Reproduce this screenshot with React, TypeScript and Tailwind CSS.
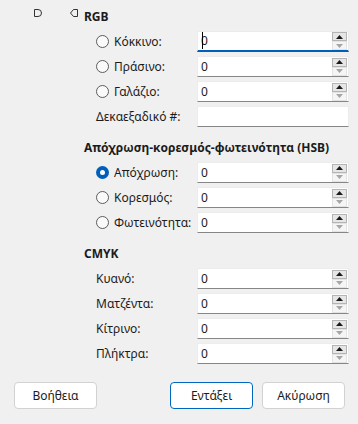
import React from "react";

type Row = { label: string; value: string; radio?: boolean; checked?: boolean; spin?: boolean; focused?: boolean };

const rgb: Row[] = [
  { label: "Κόκκινο:", value: "0", radio: true, spin: true, focused: true },
  { label: "Πράσινο:", value: "0", radio: true, spin: true },
  { label: "Γαλάζιο:", value: "0", radio: true, spin: true },
  { label: "Δεκαεξαδικό #:", value: "" },
];

const hsb: Row[] = [
  { label: "Απόχρωση:", value: "0", radio: true, checked: true, spin: true },
  { label: "Κορεσμός:", value: "0", radio: true, spin: true },
  { label: "Φωτεινότητα:", value: "0", radio: true, spin: true },
];

const cmyk: Row[] = [
  { label: "Κυανό:", value: "0", spin: true },
  { label: "Ματζέντα:", value: "0", spin: true },
  { label: "Κίτρινο:", value: "0", spin: true },
  { label: "Πλήκτρα:", value: "0", spin: true },
];

function Radio({ checked }: { checked?: boolean }) {
  if (checked) {
    return (
      <span className="flex h-[13px] w-[13px] items-center justify-center rounded-full bg-[#005fb8]">
        <span className="h-[5px] w-[5px] rounded-full bg-white" />
      </span>
    );
  }
  return <span className="h-[13px] w-[13px] rounded-full border border-[#5c5c5c] bg-[#fafafa]" />;
}

function Spin() {
  return (
    <div className="flex flex-col gap-0 pr-[1px]">
      <div className="flex h-[9px] w-[15px] items-center justify-center border border-[#b4b4b4] bg-[#e6e6e6]">
        <svg width="7" height="4" viewBox="0 0 7 4">
          <path d="M0 4 L3.5 0 L7 4 Z" fill="#1a1a1a" />
        </svg>
      </div>
      <div className="flex h-[9px] w-[15px] items-center justify-center border border-[#e3e3e3] bg-[#f5f5f5]">
        <svg width="7" height="4" viewBox="0 0 7 4">
          <path d="M0 0 L7 0 L3.5 4 Z" fill="#a6a6a6" />
        </svg>
      </div>
    </div>
  );
}

function Field({ row }: { row: Row }) {
  return (
    <div className="flex h-[21px] items-center">
      <div className="flex w-[113px] items-center gap-[5px] pl-[12px]">
        {row.radio && <Radio checked={row.checked} />}
        <span className="whitespace-nowrap text-[12px] leading-[16px] text-[#1b1b1b]">{row.label}</span>
      </div>
      <div
        className={`flex h-[21px] w-[152px] items-center justify-between border border-[#ececec] bg-white pl-[3px] ${
          row.focused ? "border-b-2 border-b-[#005fb8]" : "border-b-[#868686]"
        }`}
      >
        <span className="relative text-[12px] leading-[16px] text-[#1b1b1b]">
          {row.focused && <span className="absolute left-[1px] top-[-1px] h-[17px] w-[1px] bg-black" />}
          {row.value}
        </span>
        {row.spin && <Spin />}
      </div>
    </div>
  );
}

function Section({ title, rows, first }: { title: string; rows: Row[]; first?: boolean }) {
  return (
    <div className={first ? "" : "mt-[13px]"}>
      <div className="mb-[6px] h-[16px] text-[12px] font-bold leading-[16px] text-[#1b1b1b]">{title}</div>
      <div className="flex flex-col gap-[4px]">
        {rows.map((r) => (
          <Field key={r.label} row={r} />
        ))}
      </div>
    </div>
  );
}

function Btn({ label, primary }: { label: string; primary?: boolean }) {
  return (
    <button
      className={`flex h-[27px] w-[83px] items-center justify-center rounded-[4px] border bg-white text-[12px] text-[#1b1b1b] ${
        primary ? "border-[#0067c0]" : "border-[#d2d2d2]"
      }`}
    >
      {label}
    </button>
  );
}

export default function App() {
  return (
    <div
      className="flex h-[424px] w-[358px] flex-col bg-[#f0f0f0]"
      style={{ fontFamily: '"Noto Sans", "Open Sans", sans-serif' }}
    >
      <div className="flex pt-[9px]">
        <div className="flex w-[84px] items-start pl-[34px]">
          <svg width="8" height="8" viewBox="0 0 8 8">
            <path d="M0.5 0.5 H4 Q7.5 0.5 7.5 4 Q7.5 7.5 4 7.5 H0.5 Z" fill="none" stroke="#333" strokeWidth="1" />
          </svg>
          <svg width="8" height="8" viewBox="0 0 8 8" className="ml-[28px]">
            <path d="M7.5 0.5 H3.5 L0.5 4 L3.5 7.5 H7.5 Z" fill="none" stroke="#333" strokeWidth="1" />
          </svg>
        </div>
        <div className="flex flex-col">
          <Section title="RGB" rows={rgb} first />
          <Section title="Απόχρωση-κορεσμός-φωτεινότητα (HSB)" rows={hsb} />
          <Section title="CMYK" rows={cmyk} />
        </div>
      </div>
      <div className="mt-[18px] flex pl-[14px]">
        <Btn label="Βοήθεια" />
        <div className="ml-[73px] flex gap-[9px]">
          <Btn label="Εντάξει" primary />
          <Btn label="Ακύρωση" />
        </div>
      </div>
    </div>
  );
}
